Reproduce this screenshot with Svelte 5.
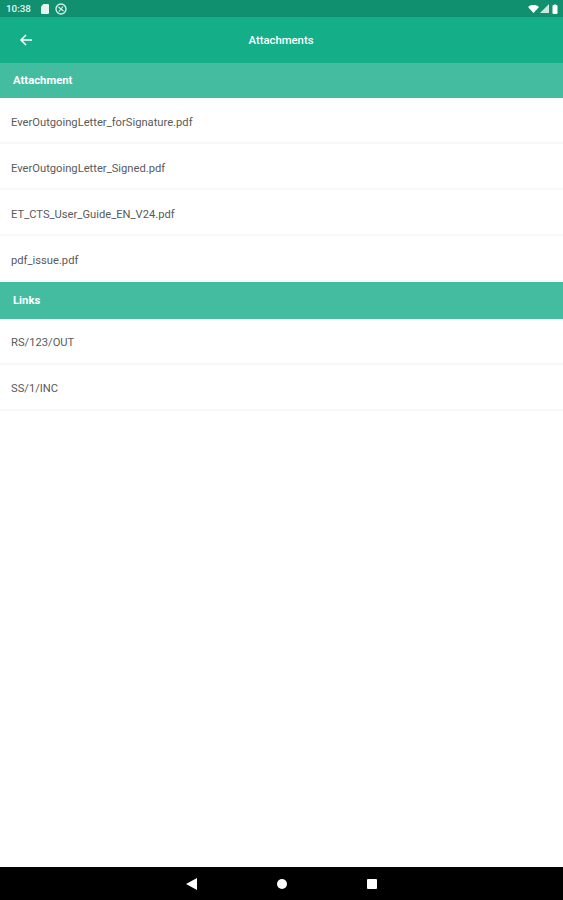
<script>
    const attachments = [
        'EverOutgoingLetter_forSignature.pdf',
        'EverOutgoingLetter_Signed.pdf',
        'ET_CTS_User_Guide_EN_V24.pdf',
        'pdf_issue.pdf'
    ]
    const links = ['RS/123/OUT', 'SS/1/INC']
</script>

<div class="screen">
    <div class="status-bar">
        <span class="time">10:38</span>
        <svg class="status-icon" width="8" height="10" viewBox="0 0 8 10"><path d="M2.500 0H7a1 1 0 0 1 1 1v8a1 1 0 0 1-1 1H1a1 1 0 0 1-1-1V2.500z" fill="#e6f4ef"/></svg>
        <svg class="status-icon at" width="12" height="12" viewBox="0 0 12 12"><circle cx="6" cy="6" r="5" fill="none" stroke="#d5ede5" stroke-width="1.400"/><path d="M3.500 4 8.500 8M8 3.500 4 8.500" stroke="#d5ede5" stroke-width="1.200"/></svg>
        <span class="spacer"></span>
        <svg width="11" height="8" viewBox="0 0 11 8"><path d="M0 2a8 8 0 0 1 11 0L5.500 8z" fill="#fff"/></svg>
        <svg class="signal" width="9" height="9" viewBox="0 0 9 9"><path d="M9 0v9H0z" fill="#cfe6de"/></svg>
        <svg class="battery" width="6" height="10" viewBox="0 0 6 10"><path d="M1.500 1h1V0h1v1h1a1 1 0 0 1 1 1v7a1 1 0 0 1-1 1h-3a1 1 0 0 1-1-1V2a1 1 0 0 1 1-1z" fill="#fff"/></svg>
    </div>

    <header class="app-bar">
        <button class="back" type="button" aria-label="Back">
            <svg width="14" height="14" viewBox="0 0 14 14"><path d="M13 7H2M7 2 2 7l5 5" fill="none" stroke="#fff" stroke-width="1.500"/></svg>
        </button>
        <h1>Attachments</h1>
    </header>

    <div class="section-title">Attachment</div>
    {#each attachments as name}
        <div class="row">{name}</div>
    {/each}

    <div class="section-title links">Links</div>
    {#each links as name}
        <div class="row link-row">{name}</div>
    {/each}

    <div class="fill"></div>

    <nav class="nav-bar">
        <svg width="11" height="12" viewBox="0 0 11 12"><path d="M11 0v12L0 6z" fill="#fff"/></svg>
        <span class="dot"></span>
        <span class="square"></span>
    </nav>
</div>

<style>
    :global(body) {
        margin: 0;
        background: #fff;
    }

    .screen {
        width: 563px;
        height: 900px;
        display: flex;
        flex-direction: column;
        font-family: Roboto, "Liberation Sans", sans-serif;
        overflow: hidden;
    }

    .status-bar {
        height: 17px;
        flex: none;
        background-color: #10906f;
        color: #e6f4ef;
        display: flex;
        align-items: center;
        padding: 0 5px 0 6px;
        box-sizing: border-box;
        font-size: 9.800px;
        font-weight: 500;
    }

    .status-icon {
        margin-left: 10px;
    }

    .status-icon.at {
        margin-left: 6px;
    }

    .spacer {
        flex: 1;
    }

    .signal {
        margin-left: 1px;
    }

    .battery {
        margin-left: 3px;
    }

    .app-bar {
        height: 46px;
        flex: none;
        background-color: #14ae89;
        position: relative;
        display: flex;
        align-items: center;
        justify-content: center;
    }

    .app-bar h1 {
        margin: 0 0 0 -1px;
        color: #fff;
        font-size: 11.300px;
        font-weight: 500;
    }

    .back {
        position: absolute;
        left: 19px;
        top: 16px;
        padding: 0;
        border: none;
        background: none;
        display: flex;
    }

    .section-title {
        height: 35px;
        flex: none;
        background-color: #44bc9f;
        color: #fff;
        font-size: 11.300px;
        font-weight: 700;
        display: flex;
        align-items: center;
        padding-left: 13px;
    }

    .section-title.links {
        height: 37px;
    }

    .row {
        height: 46px;
        flex: none;
        border-bottom: 2px solid #f8f8f8;
        color: #5a5a5a;
        font-size: 11.200px;
        display: flex;
        align-items: center;
        padding: 4px 0 0 11px;
        box-sizing: border-box;
    }

    .row.link-row {
        padding-top: 2px;
    }

    .fill {
        flex: 1;
    }

    .nav-bar {
        height: 33px;
        flex: none;
        background-color: #000;
        display: flex;
        align-items: center;
        gap: 80px;
        padding-left: 186px;
        box-sizing: border-box;
    }

    .dot {
        width: 10px;
        height: 10px;
        border-radius: 50%;
        background: #fff;
    }

    .square {
        width: 10px;
        height: 10px;
        border-radius: 1px;
        background: #fff;
    }
</style>
